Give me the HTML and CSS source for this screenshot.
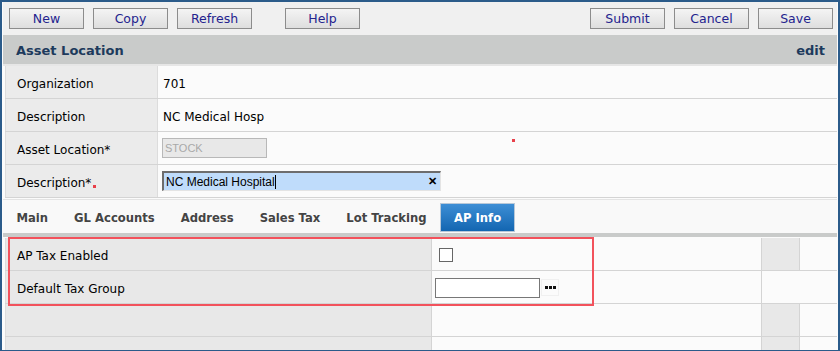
FILE: index.html
```html
<!DOCTYPE html>
<html lang="en">
<head>
    <meta charset="UTF-8">
    <title>Asset Location</title>
    <link rel="stylesheet" href="styles.css">
</head>
<body>
    <div class="frame">
        <div class="toolbar">
            <button class="btn">New</button>
            <button class="btn">Copy</button>
            <button class="btn">Refresh</button>
            <button class="btn help">Help</button>
            <span class="spacer"></span>
            <button class="btn">Submit</button>
            <button class="btn">Cancel</button>
            <button class="btn">Save</button>
        </div>

        <div class="page-title">
            <span>Asset Location</span>
            <span>edit</span>
        </div>

        <div class="fields">
            <div class="row">
                <div class="label">Organization</div>
                <div class="value text">701</div>
            </div>
            <div class="row">
                <div class="label">Description</div>
                <div class="value text">NC Medical Hosp</div>
            </div>
            <div class="row">
                <div class="label">Asset Location*</div>
                <div class="value">
                    <div class="input readonly">STOCK</div>
                    <span class="dot stray"></span>
                </div>
            </div>
            <div class="row">
                <div class="label">Description*<span class="dot"></span></div>
                <div class="value">
                    <div class="input focused"><span>NC Medical Hospital</span><span class="caret"></span><span class="clear">&#x2715;</span></div>
                </div>
            </div>
        </div>

        <div class="tabs">
            <div class="tab">Main</div>
            <div class="tab">GL Accounts</div>
            <div class="tab">Address</div>
            <div class="tab">Sales Tax</div>
            <div class="tab">Lot Tracking</div>
            <div class="tab active">AP Info</div>
        </div>
        <div class="tab-bar"></div>

        <div class="grid">
            <div class="highlight"></div>
            <div class="grow">
                <div class="g-label">AP Tax Enabled</div>
                <div class="g-value"><span class="checkbox"></span></div>
                <div class="g-a"></div>
                <div class="g-b"></div>
            </div>
            <div class="grow">
                <div class="g-label">Default Tax Group</div>
                <div class="g-value"><span class="text-input"></span><span class="lookup"><i></i><i></i><i></i></span></div>
                <div class="g-wide"></div>
            </div>
            <div class="grow">
                <div class="g-label"></div>
                <div class="g-value"></div>
                <div class="g-a"></div>
                <div class="g-b"></div>
            </div>
            <div class="grow">
                <div class="g-label"></div>
                <div class="g-value"></div>
                <div class="g-a"></div>
                <div class="g-b"></div>
            </div>
        </div>
    </div>
</body>
</html>
```

FILE: styles.css
```css
body {
    margin: 0;
    background: #fff;
    font-family: 'DejaVu Sans', Verdana, sans-serif;
}
.frame {
    width: 840px;
    height: 351px;
    box-sizing: border-box;
    border: 2px solid #2b5b8a;
    border-bottom-width: 1px;
    padding: 0 1px;
    background: #fbfbfb;
    overflow: hidden;
}
.toolbar {
    display: flex;
    gap: 9px;
    height: 33px;
    box-sizing: border-box;
    padding: 6px 4px 0 6px;
    background: #f0f0f0;
}
.spacer {
    flex: 1;
}
.btn {
    width: 75px;
    height: 21px;
    padding: 0;
    border: 1px solid #8c8c8c;
    background: linear-gradient(#f4f4f4, #dedede);
    color: #23238e;
    font-family: 'DejaVu Sans', Verdana, sans-serif;
    font-size: 12.5px;
}
.help {
    margin-left: 24px;
}
.page-title {
    display: flex;
    justify-content: space-between;
    align-items: center;
    height: 28px;
    padding: 1px 12px 0 13px;
    background: #c9cbca;
    border-bottom: 2px solid #e6e6e6;
    box-sizing: content-box;
    color: #1d3a5c;
    font-weight: bold;
    font-size: 13px;
}
.fields {
    padding-left: 2px;
}
.row {
    display: flex;
    height: 33px;
    box-sizing: border-box;
    border-bottom: 1px solid #d4d4d4;
    font-size: 12px;
}
.label {
    width: 153px;
    flex: none;
    display: flex;
    align-items: center;
    padding: 4px 0 0 11px;
    box-sizing: border-box;
    background: #ebebeb;
    border-right: 1px solid #dcdcdc;
    border-left: 1px solid #dcdcdc;
}
.value {
    flex: 1;
    display: flex;
    align-items: center;
    padding-left: 4px;
    position: relative;
}
.value.text {
    padding-top: 4px;
    padding-left: 5px;
}
.dot {
    display: inline-block;
    width: 3px;
    height: 3px;
    margin: 6px 0 0 2px;
    background: #e8404a;
}
.dot.stray {
    position: absolute;
    left: 354px;
    top: 7px;
    margin: 0;
}
.input {
    height: 20px;
    box-sizing: border-box;
    display: flex;
    align-items: center;
    font-family: 'Liberation Sans', Arial, sans-serif;
    font-size: 12px;
}
.readonly {
    width: 105px;
    padding-left: 2px;
    background: #e8e8e8;
    border: 1px solid #b8b8b8;
    color: #a8a8a8;
    font-size: 11px;
}
.focused {
    width: 279px;
    padding-left: 2px;
    background: #bfdcfb;
    border-top: 2px solid #6d6d6d;
    border-left: 2px solid #6d6d6d;
    border-right: 1px solid #e4e4e4;
    border-bottom: 1px solid #e4e4e4;
    color: #000;
}
.caret {
    width: 1px;
    height: 14px;
    background: #000;
}
.clear {
    margin-left: auto;
    margin-right: 3px;
    font-size: 11px;
    font-weight: bold;
}
.tabs {
    display: flex;
    height: 33px;
    margin-top: 1px;
    padding-left: 2px;
    background: #f9f9f9;
    border-top: 1px solid #e4e4e4;
    font-size: 11.6px;
    font-weight: bold;
    color: #444;
}
.tab {
    display: flex;
    align-items: center;
    padding: 2px 14.5px 0 11.5px;
}
.tab.active {
    margin: 3px 0 1px -1px;
    padding: 0 13px;
    background: linear-gradient(#3d8ed5, #1366b1);
    border: 1px solid #b8c8d8;
    color: #fff;
}
.tab-bar {
    height: 4px;
    background: #c9cbca;
}
.grid {
    position: relative;
    padding-left: 2px;
    padding-top: 1px;
}
.highlight {
    position: absolute;
    left: 5px;
    top: 0;
    width: 586px;
    height: 69px;
    border: 2px solid #f2525c;
    box-sizing: border-box;
}
.grow {
    display: flex;
    height: 33px;
    box-sizing: border-box;
    border-bottom: 1px solid #d4d4d4;
}
.g-label {
    width: 427px;
    flex: none;
    display: flex;
    align-items: center;
    padding: 4px 0 0 11px;
    box-sizing: border-box;
    background: #e8e8e8;
    border-left: 1px solid #dcdcdc;
    border-right: 1px solid #d4d4d4;
    font-size: 12px;
}
.g-value {
    width: 330px;
    flex: none;
    display: flex;
    align-items: center;
    padding: 1px 0 0 3px;
    box-sizing: border-box;
    border-right: 1px solid #d4d4d4;
}
.g-a {
    width: 37px;
    flex: none;
    background: #e8e8e8;
    border-right: 1px solid #d4d4d4;
}
.g-b,
.g-wide {
    flex: 1;
}
.checkbox {
    width: 12px;
    height: 12px;
    margin-left: 4px;
    border: 1px solid #666;
    background: #fff;
}
.text-input {
    width: 105px;
    height: 20px;
    box-sizing: border-box;
    border: 1px solid #777;
    background: #fff;
}
.lookup {
    display: flex;
    align-items: center;
    gap: 1px;
    width: 18px;
    height: 17px;
    margin-left: 1px;
    padding-left: 3px;
    box-sizing: border-box;
    border: 1px solid #f0f0f0;
}
.lookup i {
    width: 3px;
    height: 3px;
    background: #111;
}
```
